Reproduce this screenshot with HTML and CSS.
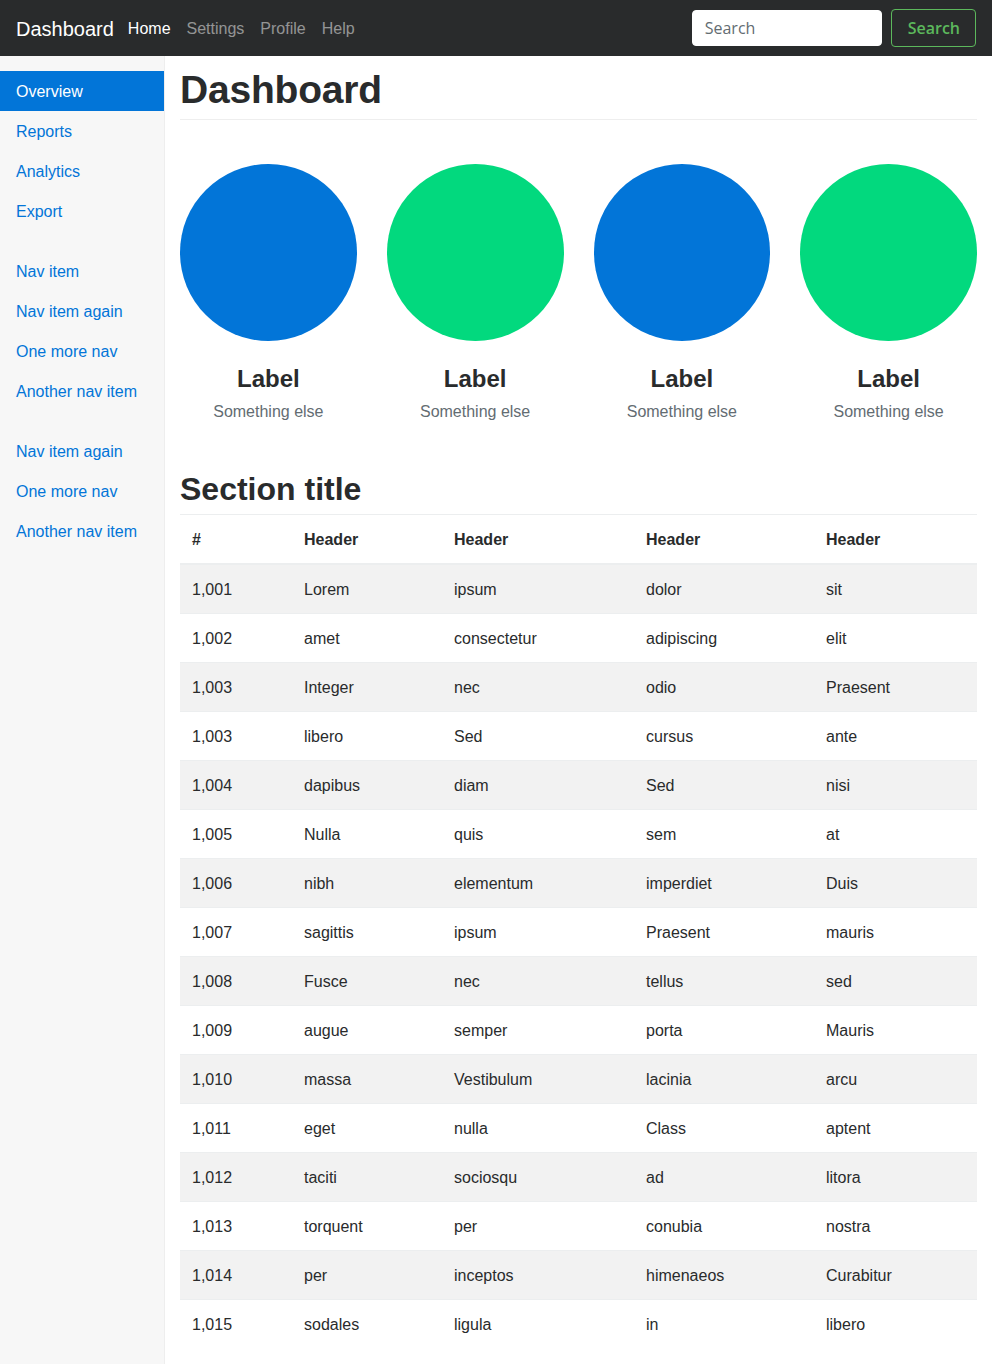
FILE: index.html
```html
<!DOCTYPE html>
<html lang="en">
<head>
<meta charset="utf-8">
<title>Dashboard</title>
<link rel="stylesheet" href="styles.css">
</head>
<body>
<nav class="topbar">
  <a class="brand" href="#">Dashboard</a>
  <ul class="topnav">
    <li><a class="toplink active" href="#">Home</a></li>
    <li><a class="toplink" href="#">Settings</a></li>
    <li><a class="toplink" href="#">Profile</a></li>
    <li><a class="toplink" href="#">Help</a></li>
  </ul>
  <form class="search">
    <input class="search-input" type="text" placeholder="Search">
    <button class="search-btn" type="button">Search</button>
  </form>
</nav>
<div class="layout">
  <aside class="sidebar">
    <ul class="sidenav">
      <li><a class="sidelink active" href="#">Overview</a></li>
      <li><a class="sidelink" href="#">Reports</a></li>
      <li><a class="sidelink" href="#">Analytics</a></li>
      <li><a class="sidelink" href="#">Export</a></li>
    </ul>
    <ul class="sidenav">
      <li><a class="sidelink" href="#">Nav item</a></li>
      <li><a class="sidelink" href="#">Nav item again</a></li>
      <li><a class="sidelink" href="#">One more nav</a></li>
      <li><a class="sidelink" href="#">Another nav item</a></li>
    </ul>
    <ul class="sidenav">
      <li><a class="sidelink" href="#">Nav item again</a></li>
      <li><a class="sidelink" href="#">One more nav</a></li>
      <li><a class="sidelink" href="#">Another nav item</a></li>
    </ul>
  </aside>
  <main class="main">
    <h1 class="page-title">Dashboard</h1>
    <section class="placeholders">
      <div class="placeholder">
        <div class="circle blue"></div>
        <h4 class="ph-label">Label</h4>
        <span class="ph-sub">Something else</span>
      </div>
      <div class="placeholder">
        <div class="circle green"></div>
        <h4 class="ph-label">Label</h4>
        <span class="ph-sub">Something else</span>
      </div>
      <div class="placeholder">
        <div class="circle blue"></div>
        <h4 class="ph-label">Label</h4>
        <span class="ph-sub">Something else</span>
      </div>
      <div class="placeholder">
        <div class="circle green"></div>
        <h4 class="ph-label">Label</h4>
        <span class="ph-sub">Something else</span>
      </div>
    </section>
    <h2 class="section-title">Section title</h2>
    <table class="data">
      <thead>
        <tr><th>#</th><th>Header</th><th>Header</th><th>Header</th><th>Header</th></tr>
      </thead>
      <tbody>
        <tr><td>1,001</td><td>Lorem</td><td>ipsum</td><td>dolor</td><td>sit</td></tr>
        <tr><td>1,002</td><td>amet</td><td>consectetur</td><td>adipiscing</td><td>elit</td></tr>
        <tr><td>1,003</td><td>Integer</td><td>nec</td><td>odio</td><td>Praesent</td></tr>
        <tr><td>1,003</td><td>libero</td><td>Sed</td><td>cursus</td><td>ante</td></tr>
        <tr><td>1,004</td><td>dapibus</td><td>diam</td><td>Sed</td><td>nisi</td></tr>
        <tr><td>1,005</td><td>Nulla</td><td>quis</td><td>sem</td><td>at</td></tr>
        <tr><td>1,006</td><td>nibh</td><td>elementum</td><td>imperdiet</td><td>Duis</td></tr>
        <tr><td>1,007</td><td>sagittis</td><td>ipsum</td><td>Praesent</td><td>mauris</td></tr>
        <tr><td>1,008</td><td>Fusce</td><td>nec</td><td>tellus</td><td>sed</td></tr>
        <tr><td>1,009</td><td>augue</td><td>semper</td><td>porta</td><td>Mauris</td></tr>
        <tr><td>1,010</td><td>massa</td><td>Vestibulum</td><td>lacinia</td><td>arcu</td></tr>
        <tr><td>1,011</td><td>eget</td><td>nulla</td><td>Class</td><td>aptent</td></tr>
        <tr><td>1,012</td><td>taciti</td><td>sociosqu</td><td>ad</td><td>litora</td></tr>
        <tr><td>1,013</td><td>torquent</td><td>per</td><td>conubia</td><td>nostra</td></tr>
        <tr><td>1,014</td><td>per</td><td>inceptos</td><td>himenaeos</td><td>Curabitur</td></tr>
        <tr><td>1,015</td><td>sodales</td><td>ligula</td><td>in</td><td>libero</td></tr>
      </tbody>
    </table>
  </main>
</div>
</body>
</html>
```
FILE: styles.css
```css
* { box-sizing: border-box; }
html, body { margin: 0; padding: 0; }
body {
  font-family: "Liberation Sans", Arial, sans-serif;
  font-size: 16px;
  line-height: 24px;
  color: #292b2c;
  background: #fff;
}
a { text-decoration: none; }
ul { list-style: none; margin: 0; padding: 0; }

/* top bar */
.topbar {
  height: 56px;
  background: #292b2c;
  display: flex;
  align-items: center;
  padding: 0 16px;
}
.brand {
  color: #fff;
  font-size: 20px;
  line-height: 30px;
  padding-top: 2px;
  margin-right: 6px;
}
.topnav { display: flex; padding-top: 2px; }
.toplink {
  display: block;
  padding: 0 8px;
  color: rgba(255,255,255,0.5);
  font-size: 16px;
  line-height: 24px;
}
.toplink.active { color: #fff; }
.search {
  margin-left: auto;
  display: flex;
  align-items: center;
}
.search-input {
  width: 190px;
  height: 36px;
  border: 1px solid #fff;
  border-radius: 4px;
  background: #fff;
  padding: 0 12px;
  font-family: "Open Sans", sans-serif;
  font-size: 16px;
  color: #464a4c;
  margin-right: 9px;
  outline: none;
}
.search-input::placeholder { color: #636c72; opacity: 1; }
.search-btn {
  height: 38px;
  padding: 0 15px 0 16px;
  border: 1px solid #5cb85c;
  border-radius: 4px;
  background: transparent;
  color: #5cb85c;
  font-family: "Open Sans", sans-serif;
  font-weight: 600;
  font-size: 16px;
}

/* layout */
.layout {
  display: flex;
  min-height: calc(100vh - 56px);
}
.sidebar {
  width: 165px;
  flex: none;
  background: #f7f7f7;
  border-right: 1px solid #eee;
  padding-top: 15px;
}
.sidenav { margin-bottom: 20px; }
.sidelink {
  display: block;
  padding: 9px 16px 7px;
  color: #0275d8;
  font-size: 16px;
  line-height: 24px;
}
.sidelink.active {
  background: #0275d8;
  color: #fff;
}

.main {
  flex: 1;
  padding: 12px 15px 16px;
}
.page-title {
  margin: 0 0 44px;
  font-size: 39px;
  line-height: 44px;
  font-weight: 700;
  letter-spacing: -0.2px;
  padding-bottom: 7px;
  border-bottom: 1px solid #eee;
}
.placeholders {
  display: grid;
  grid-template-columns: repeat(4, 1fr);
  column-gap: 30px;
  text-align: center;
  margin-bottom: 29px;
}
.placeholder { margin-bottom: 20px; }
.circle {
  width: 100%;
  aspect-ratio: 1 / 1;
  border-radius: 50%;
  margin-bottom: 25px;
}
.circle.blue { background: #0275d8; }
.circle.green { background: #02d97e; }
.ph-label {
  margin: 0 0 8px;
  font-size: 24px;
  line-height: 26px;
  font-weight: 700;
}
.ph-sub {
  display: block;
  color: #636c72;
  font-size: 16px;
  line-height: 24px;
  margin-bottom: -1px;
}
.section-title {
  margin: 0 0 7px;
  font-size: 32px;
  line-height: 35px;
  font-weight: 700;
}

.data {
  width: 100%;
  border-collapse: collapse;
  table-layout: fixed;
}
.data th, .data td {
  text-align: left;
  padding: 13px 12px 11px;
  line-height: 24px;
  border-top: 1px solid #eceeef;
  font-size: 16px;
}
.data th { font-weight: 700; border-bottom: 2px solid #eceeef; }
.data th:nth-child(1) { width: 112px; }
.data th:nth-child(2) { width: 150px; }
.data th:nth-child(3) { width: 192px; }
.data th:nth-child(4) { width: 180px; }
.data tbody tr:nth-child(odd) { background: #f2f2f2; }
```
